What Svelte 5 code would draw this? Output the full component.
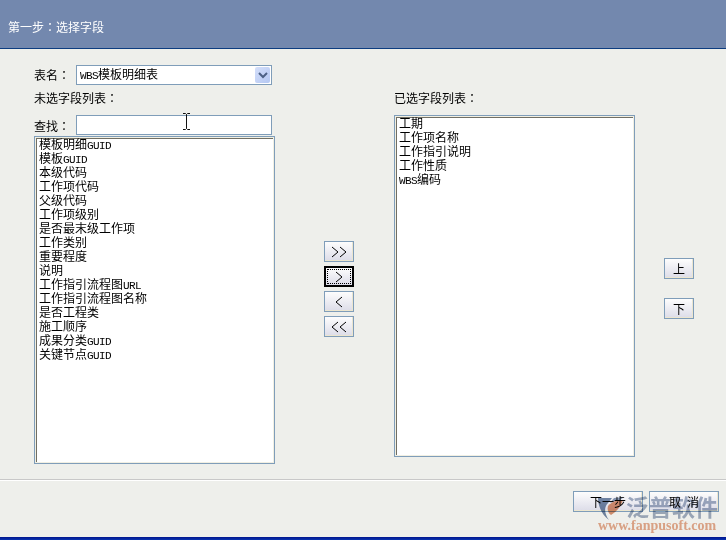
<script>
    const unselected = [
        '模板明细GUID', '模板GUID', '本级代码', '工作项代码', '父级代码', '工作项级别',
        '是否最末级工作项', '工作类别', '重要程度', '说明', '工作指引流程图URL',
        '工作指引流程图名称', '是否工程类', '施工顺序', '成果分类GUID', '关键节点GUID'
    ];
    const selected = ['工期', '工作项名称', '工作指引说明', '工作性质', 'WBS编码'];

    const arrows = [
        { points: ['1,1 7,6 1,11', '9,1 15,6 9,11'], focus: false },
        { points: ['5,1 11,6 5,11'], focus: true },
        { points: ['11,1 5,6 11,11'], focus: false },
        { points: ['7,1 1,6 7,11', '15,1 9,6 15,11'], focus: false }
    ];

    // latin parts are narrower, as in the old bitmap font
    function split(text) {
        return text.split(/([A-Z]+)/).filter(Boolean).map((t) => ({ t, latin: /^[A-Z]+$/.test(t) }));
    }
</script>

{#snippet label(text)}{#each split(text) as part}{#if part.latin}<span class="latin">{part.t}</span>{:else}{part.t}{/if}{/each}{/snippet}

<div class="dialog">
    <header>第一步<span class="colon">：</span>选择字段</header>

    <main>
        <section class="left">
            <div class="field">
                <span class="caption">表名<span class="colon">：</span></span>
                <div class="select">
                    <span class="value">{@render label('WBS模板明细表')}</span>
                    <span class="drop">
                        <svg width="10" height="7" viewBox="0 0 10 7">
                            <polyline points="1,1 5,5 9,1" fill="none" stroke="#4d6185" stroke-width="2" />
                        </svg>
                    </span>
                </div>
            </div>
            <div class="list-title">未选字段列表<span class="colon">：</span></div>
            <div class="field search">
                <span class="caption low">查找<span class="colon">：</span></span>
                <div class="input"></div>
                <svg class="ibeam" width="9" height="17" viewBox="0 0 9 17">
                    <path d="M1 .5h2.500l1 1 1-1H8M4.500 1.500v14M1 16.500h2.500l1-1 1 1H8" fill="none" stroke="#111" />
                </svg>
            </div>
            <div class="listbox left-list">
                <ul>
                    {#each unselected as item}
                        <li>{@render label(item)}</li>
                    {/each}
                </ul>
            </div>
        </section>

        <section class="arrows">
            {#each arrows as a}
                <button class="btn arrow" class:focus={a.focus}>
                    <svg width="16" height="12" viewBox="0 0 16 12">
                        {#each a.points as p}
                            <polyline points={p} fill="none" stroke="#000" />
                        {/each}
                    </svg>
                </button>
            {/each}
        </section>

        <section class="right">
            <div class="list-title">已选字段列表<span class="colon">：</span></div>
            <div class="listbox right-list">
                <ul>
                    {#each selected as item}
                        <li>{@render label(item)}</li>
                    {/each}
                </ul>
            </div>
        </section>

        <section class="order">
            <button class="btn small">上</button>
            <button class="btn small">下</button>
        </section>
    </main>

    <footer>
        <button class="btn wide">下一步</button>
        <button class="btn wide"><span class="spaced">取</span>消</button>
    </footer>
    <div class="bottom-bar"></div>

    <div class="watermark">
        <svg class="mark" width="36" height="30" viewBox="0 0 36 30">
            <path d="M2 3 L16 3 L12 8 C8 12 8 18 13 25 C6 20 2 11 2 3Z" fill="#7489a8" />
            <path d="M18 3 L28 2 L24 5 L14 8Z" fill="#8b9cb6" />
            <path d="M12 11 C15 7 21 5 27 5 C25 12 20 17 15 20 C12 18 11 14 12 11Z" fill="#dd9473" />
        </svg>
        <span class="brand">泛普软件</span>
        <span class="url">www.fanpusoft.com</span>
    </div>
</div>

<style>
    :global(body) {
        background: #eeefeb;
    }

    .dialog {
        position: relative;
        width: 726px;
        height: 540px;
        display: flex;
        flex-direction: column;
        overflow: hidden;
        background: #eeefeb;
        color: #000;
        font: 12px/14px "Noto Sans CJK SC", sans-serif;
    }

    .colon {
        font-family: "Noto Sans CJK TC", sans-serif;
    }

    header {
        height: 49px;
        box-sizing: border-box;
        padding: 20px 0 0 8px;
        background: #7388ae;
        border-bottom: 1px solid #0c3c80;
        color: #fff;
    }

    main {
        flex: 1;
        display: flex;
        align-items: flex-start;
        box-sizing: border-box;
        padding: 16px 0 0 34px;
        border-bottom: 1px solid #c8c8c8;
        box-shadow: 0 1px 0 #fff;
    }

    .left {
        width: 241px;
        display: flex;
        flex-direction: column;
    }

    .field {
        display: flex;
        align-items: center;
        height: 20px;
    }

    .caption {
        width: 42px;
        flex: none;
    }

    .caption.low {
        padding-top: 2px;
    }

    .select, .input {
        width: 196px;
        height: 20px;
        box-sizing: border-box;
        border: 1px solid #7f9db9;
        background: #fff;
    }

    .select {
        display: flex;
        align-items: center;
        justify-content: space-between;
        padding: 0 0 0 3px;
    }

    .drop {
        width: 15px;
        height: 16px;
        margin-right: 1px;
        display: flex;
        align-items: center;
        justify-content: center;
        background: linear-gradient(135deg, #d4dffa, #b4c7f2);
        border-radius: 2px;
    }

    .latin {
        font-family: "Liberation Mono", monospace;
        font-size: 11px;
        letter-spacing: -0.6px;
    }

    .list-title {
        height: 14px;
        margin-top: 6px;
    }

    .search {
        position: relative;
        margin-top: 10px;
    }

    .ibeam {
        position: absolute;
        left: 148px;
        top: -2px;
    }

    .listbox {
        box-sizing: border-box;
        width: 241px;
        border: 1px solid #7f9db9;
        background: #f1efe2;
        padding: 1px;
    }

    .listbox ul {
        list-style: none;
        margin: 0;
        padding: 0 0 0 2px;
        height: 100%;
        box-sizing: border-box;
        background: #fff;
        border-top: 1px solid #716f64;
        border-left: 1px solid #716f64;
    }

    .listbox li {
        height: 14px;
        line-height: 10px;
        white-space: nowrap;
    }

    .left-list {
        height: 328px;
        margin-top: 1px;
    }

    .arrows {
        width: 30px;
        margin: 176px 0 0 49px;
        display: flex;
        flex-direction: column;
        gap: 4px;
    }

    .right {
        width: 241px;
        margin-left: 40px;
    }

    .right .list-title {
        margin-top: 26px;
    }

    .right-list {
        height: 342px;
        margin-top: 10px;
    }

    .order {
        margin: 193px 0 0 29px;
        display: flex;
        flex-direction: column;
        gap: 19px;
    }

    .btn {
        box-sizing: border-box;
        padding: 0;
        border: 1px solid #7f9db9;
        box-shadow: inset -1px -1px 0 #ece6cf;
        background: linear-gradient(#fdfdfd, #dcdce8);
        color: #000;
        font: inherit;
        display: flex;
        align-items: center;
        justify-content: center;
    }

    .arrow {
        width: 30px;
        height: 21px;
    }

    .arrow.focus {
        position: relative;
        border: 2px solid #000;
        box-shadow: none;
    }

    .arrow.focus::after {
        content: "";
        position: absolute;
        inset: 1px;
        border: 1px dotted #000;
    }

    .small {
        width: 30px;
        height: 21px;
    }

    footer {
        height: 57px;
        box-sizing: border-box;
        padding: 11px 7px 0 0;
        display: flex;
        justify-content: flex-end;
        gap: 6px;
    }

    .wide {
        width: 70px;
        height: 21px;
    }

    .spaced {
        margin-right: 6px;
    }

    .bottom-bar {
        height: 3px;
        background: linear-gradient(#00148c, #0a34b0);
    }

    .watermark {
        position: absolute;
        left: 596px;
        top: 493px;
        width: 130px;
        height: 40px;
        pointer-events: none;
        mix-blend-mode: multiply;
    }

    .mark {
        position: absolute;
        left: 0;
        top: 2px;
    }

    .brand {
        position: absolute;
        left: 30px;
        top: 0;
        font-size: 23px;
        font-weight: bold;
        line-height: 26px;
        white-space: nowrap;
        color: #a3afc4;
    }

    .url {
        position: absolute;
        left: 2px;
        top: 27px;
        font: bold 14px/12px "Liberation Serif", serif;
        white-space: nowrap;
        color: #e8ab8e;
    }
</style>
